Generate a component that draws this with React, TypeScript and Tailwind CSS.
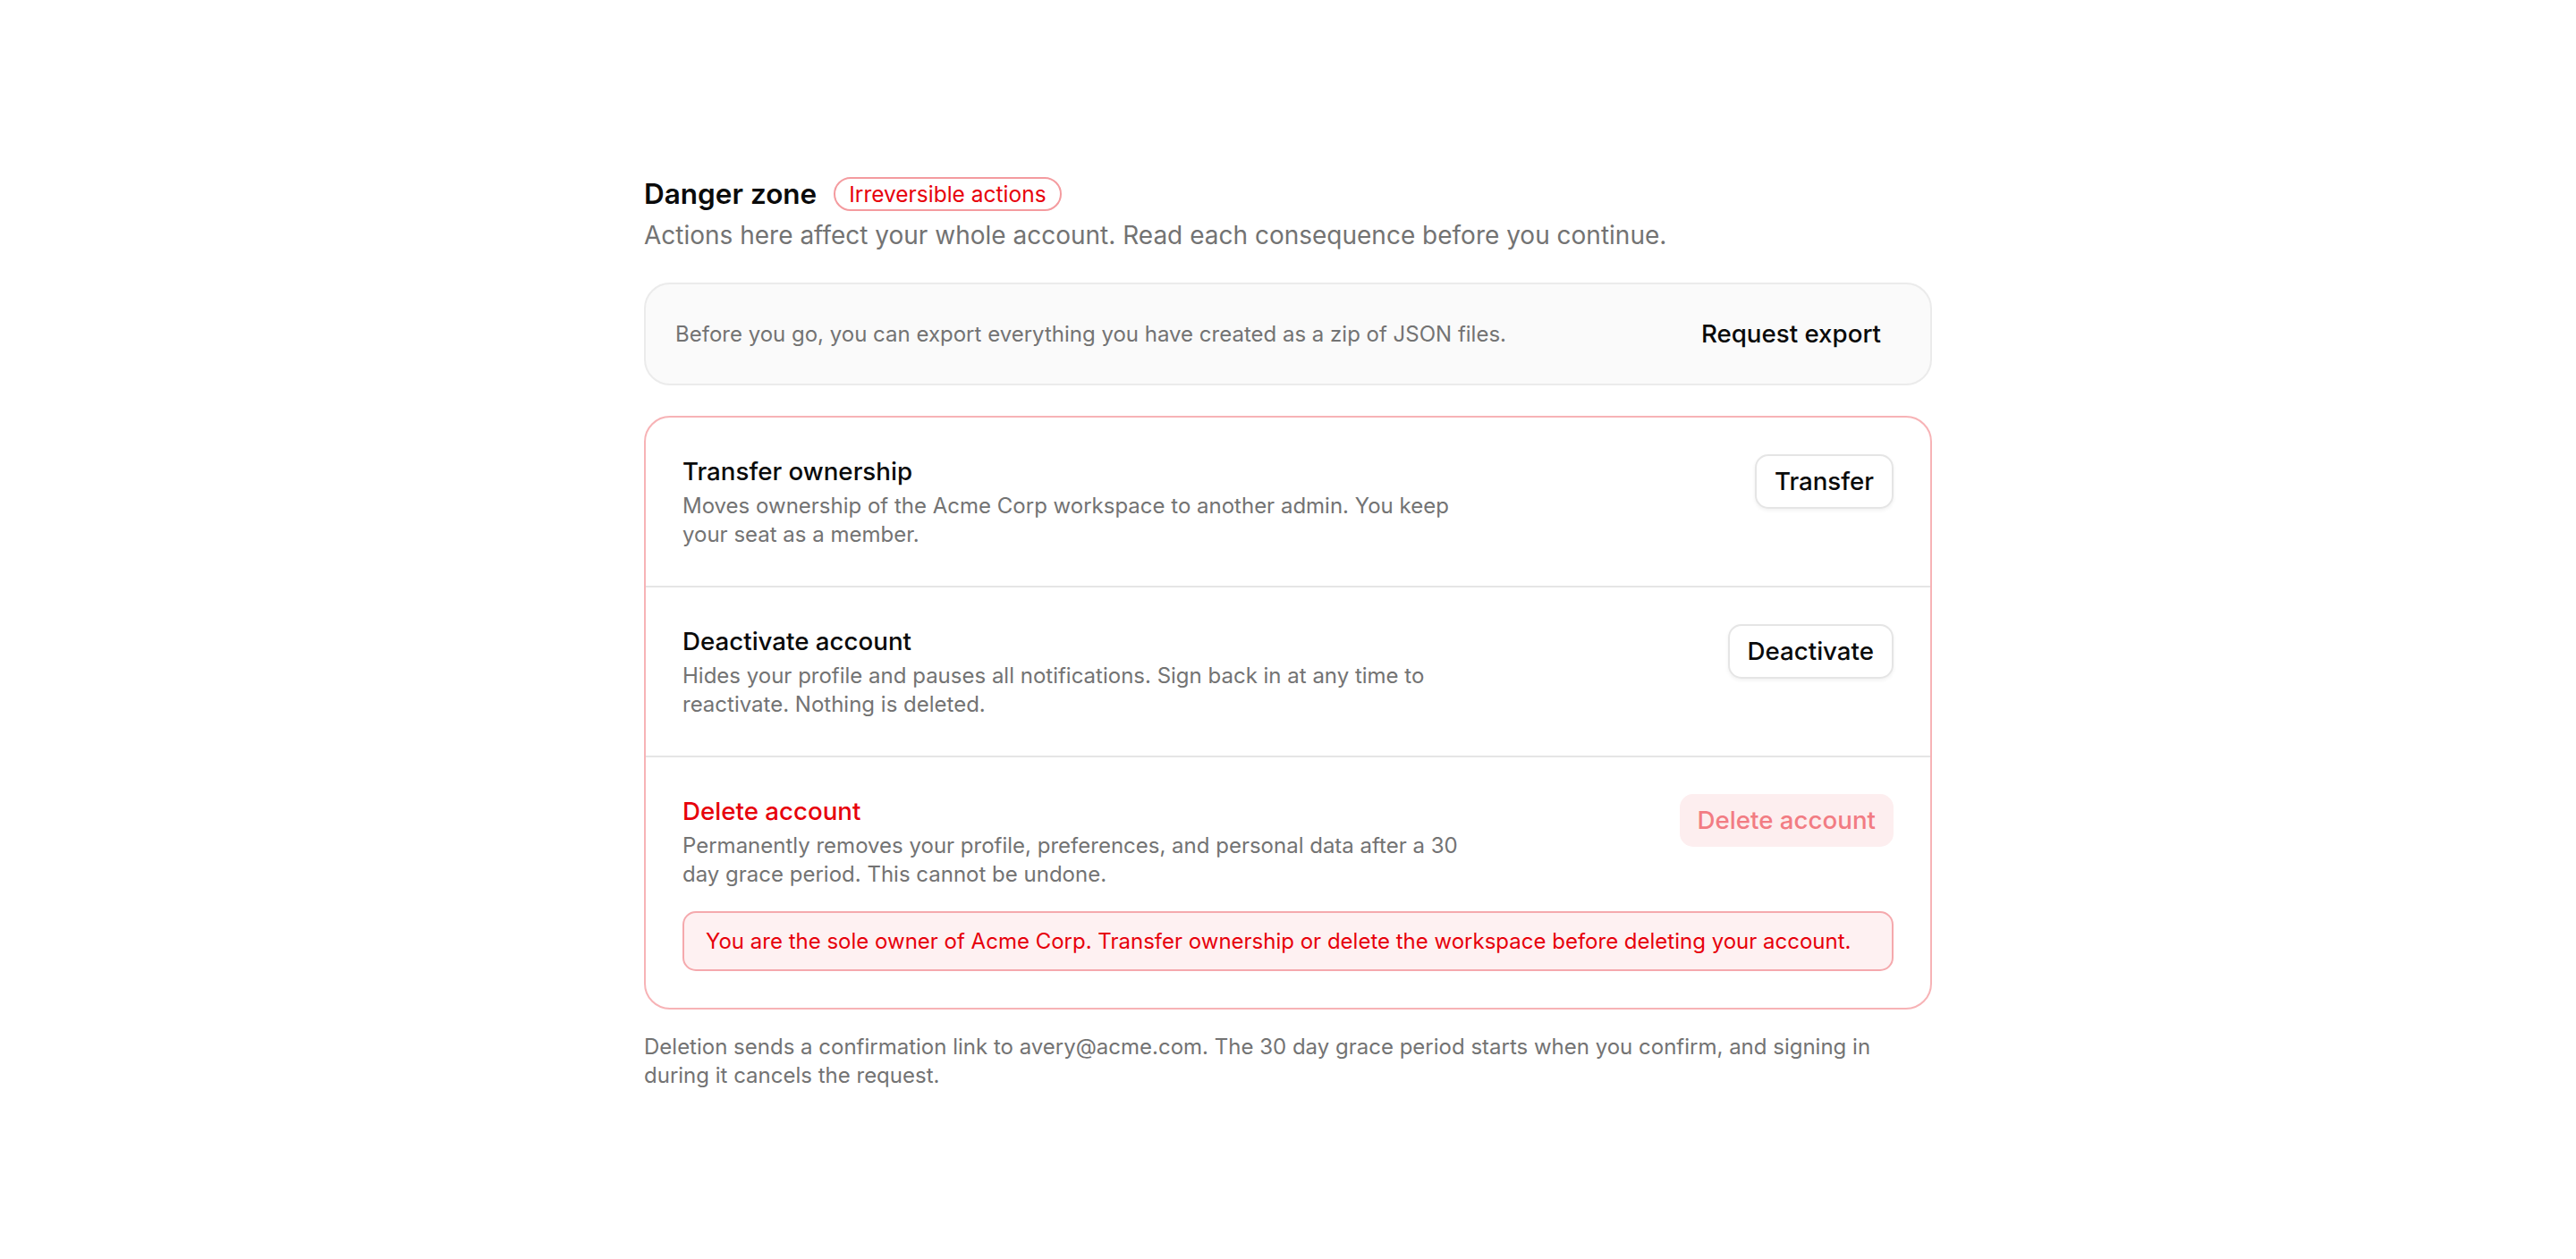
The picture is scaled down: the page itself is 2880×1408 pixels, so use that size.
import React from "react";

type Row = {
  title: string;
  body: string;
  action: string;
  danger?: boolean;
};

const rows: Row[] = [
  {
    title: "Transfer ownership",
    body: "Moves ownership of the Acme Corp workspace to another admin. You keep your seat as a member.",
    action: "Transfer",
  },
  {
    title: "Deactivate account",
    body: "Hides your profile and pauses all notifications. Sign back in at any time to reactivate. Nothing is deleted.",
    action: "Deactivate",
  },
  {
    title: "Delete account",
    body: "Permanently removes your profile, preferences, and personal data after a 30 day grace period. This cannot be undone.",
    action: "Delete account",
    danger: true,
  },
];

const DangerRow = ({ row, last }: { row: Row; last: boolean }) => {
  return (
    <div
      className={`px-[41px] py-[41px] ${last ? "" : "border-b-2 border-[#e5e5e5]"}`}
    >
      <div className="flex items-start justify-between gap-8">
        <div className="max-w-[884px]">
          <div
            className={`pt-[2px] text-[27.7px] leading-[34px] font-medium ${
              row.danger ? "text-[#e7000b]" : "text-[#0a0a0a]"
            }`}
          >
            {row.title}
          </div>
          <p className="mt-[6px] text-[24px] leading-[32px] text-[#737373]">
            {row.body}
          </p>
        </div>
        {row.danger ? (
          <button
            disabled
            className="shrink-0 h-[59px] px-[20px] rounded-[15px] bg-[#fdeeef] text-[27.7px] font-medium text-[#f27c83]"
          >
            {row.action}
          </button>
        ) : (
          <button className="shrink-0 h-[61px] px-[20px] rounded-[15px] border-2 border-[#e5e5e5] bg-white text-[27.7px] font-medium text-[#0a0a0a] shadow-[0_2px_4px_rgba(0,0,0,0.06)]">
            {row.action}
          </button>
        )}
      </div>
      {row.danger && (
        <div className="mt-[25px] rounded-[15px] border-2 border-[#f5a9ad] bg-[#fef1f2] px-[24px] py-[15.5px] text-[24px] leading-[32px] text-[#e7000b]">
          You are the sole owner of Acme Corp. Transfer ownership or delete the
          workspace before deleting your account.
        </div>
      )}
    </div>
  );
};

const App = () => {
  return (
    <div
      className="min-h-screen w-full bg-white"
      style={{ fontFamily: "Inter, 'Noto Sans', sans-serif" }}
    >
      <div className="mx-auto w-[1440px] pt-[198px] pb-[150px]">
        <div className="flex items-center gap-[19px]">
          <h2 className="text-[31.5px] leading-[38px] font-semibold text-[#0a0a0a]">
            Danger zone
          </h2>
          <span className="h-[38px] flex items-center rounded-full border-2 border-[#f49b9f] px-[15px] text-[24.5px] text-[#e7000b]">
            Irreversible actions
          </span>
        </div>
        <p className="mt-[7px] text-[28px] leading-[40px] text-[#737373]">
          Actions here affect your whole account. Read each consequence before
          you continue.
        </p>

        <div className="mt-[33px] flex items-center justify-between rounded-[29px] border-2 border-[#ebebeb] bg-[#fafafa] py-[25px] pl-[33px] pr-[34px]">
          <p className="text-[24px] leading-[32px] text-[#737373]">
            Before you go, you can export everything you have created as a zip
            of JSON files.
          </p>
          <button className="h-[61px] px-[21px] rounded-[15px] text-[27.7px] font-medium text-[#0a0a0a]">
            Request export
          </button>
        </div>

        <div className="mt-[34px] rounded-[29px] border-2 border-[#f7b3b6] bg-white">
          {rows.map((row, i) => (
            <DangerRow key={row.title} row={row} last={i === rows.length - 1} />
          ))}
        </div>

        <p className="mt-[26px] text-[24px] leading-[32px] text-[#737373]">
          Deletion sends a confirmation link to avery@acme.com. The 30 day
          grace period starts when you confirm, and signing in during it
          cancels the request.
        </p>
      </div>
    </div>
  );
};

export default App;
